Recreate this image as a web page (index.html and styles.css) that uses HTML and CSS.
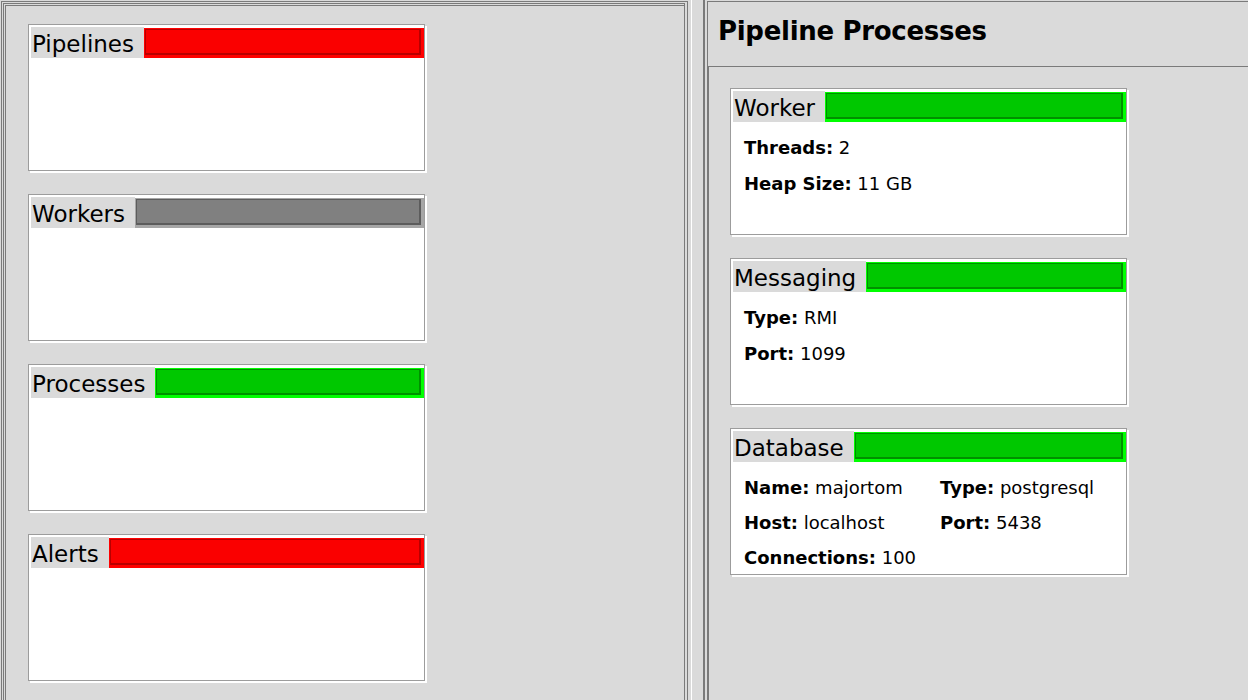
FILE: index.html
```html
<!DOCTYPE html>
<html lang="en">
<head>
<meta charset="utf-8">
<title>Pipeline Processes</title>
<link rel="stylesheet" href="styles.css">
</head>
<body>
<div class="app">
  <div class="left-pane">
    <div class="left-frame">
      <div class="left-scroll">
        <div class="left-view">
          <div class="card">
            <div class="card-header">
              <span class="card-title">Pipelines</span>
              <div class="status red"><div class="status-inner"></div></div>
            </div>
            <div class="card-body"></div>
          </div>
          <div class="card">
            <div class="card-header">
              <span class="card-title">Workers</span>
              <div class="status gray"><div class="status-inner"></div></div>
            </div>
            <div class="card-body"></div>
          </div>
          <div class="card">
            <div class="card-header">
              <span class="card-title">Processes</span>
              <div class="status green"><div class="status-inner"></div></div>
            </div>
            <div class="card-body"></div>
          </div>
          <div class="card">
            <div class="card-header">
              <span class="card-title">Alerts</span>
              <div class="status red"><div class="status-inner"></div></div>
            </div>
            <div class="card-body"></div>
          </div>
        </div>
      </div>
    </div>
  </div>
  <div class="divider"><div class="divider-line"></div></div>
  <div class="right-pane">
    <div class="right-frame">
      <h1 class="title">Pipeline Processes</h1>
      <div class="process-panel">
        <div class="card">
          <div class="card-header">
            <span class="card-title">Worker</span>
            <div class="status green"><div class="status-inner"></div></div>
          </div>
          <div class="card-body info">
            <div class="info-row"><b>Threads:</b> 2</div>
            <div class="info-row"><b>Heap Size:</b> 11 GB</div>
          </div>
        </div>
        <div class="card">
          <div class="card-header">
            <span class="card-title">Messaging</span>
            <div class="status green"><div class="status-inner"></div></div>
          </div>
          <div class="card-body info">
            <div class="info-row"><b>Type:</b> RMI</div>
            <div class="info-row"><b>Port:</b> 1099</div>
          </div>
        </div>
        <div class="card">
          <div class="card-header">
            <span class="card-title">Database</span>
            <div class="status green"><div class="status-inner"></div></div>
          </div>
          <div class="card-body info info-grid">
            <div class="info-cell"><b>Name:</b> majortom</div>
            <div class="info-cell"><b>Type:</b> postgresql</div>
            <div class="info-cell"><b>Host:</b> localhost</div>
            <div class="info-cell"><b>Port:</b> 5438</div>
            <div class="info-cell"><b>Connections:</b> 100</div>
          </div>
        </div>
      </div>
    </div>
  </div>
</div>
</body>
</html>
```

FILE: styles.css
```css
* {
  box-sizing: border-box;
}

html, body {
  margin: 0;
  padding: 0;
  background: #dadada;
}

body {
  font-family: "DejaVu Sans", "Liberation Sans", sans-serif;
  color: #000;
}

.app {
  display: flex;
  height: 700px;
  overflow: hidden;
  background: #dadada;
}

/* ---------- left pane ---------- */
.left-pane {
  width: 688px;
  flex: none;
  padding: 1px 0 0 1px;
}

.left-frame {
  min-height: 720px;
  border: 1px solid #7a7a7a;
  padding: 1px 2px 0 1px;
}

.left-scroll {
  min-height: 720px;
  border: 1px solid #7a7a7a;
  padding: 1px 0 0 1px;
}

.left-view {
  min-height: 720px;
  border-left: 1px solid #7a7a7a;
  border-top: 1px solid #7a7a7a;
  padding: 18px 0 0 22px;
  display: flex;
  flex-direction: column;
  gap: 23px;
}

/* ---------- divider ---------- */
.divider {
  width: 15px;
  flex: none;
  padding-left: 3px;
}

.divider-line {
  width: 1px;
  height: 100%;
  background: #ffffff;
}

/* ---------- right pane ---------- */
.right-pane {
  flex: 1;
  border-left: 2px solid #7a7a7a;
  padding: 1px 0 0 2px;
}

.right-frame {
  min-height: 720px;
  border-top: 1px solid #7a7a7a;
  border-left: 1px solid #7a7a7a;
}

.title {
  margin: 0;
  height: 64px;
  padding: 14px 0 20px 10px;
  font-size: 26px;
  line-height: 30px;
  font-weight: bold;
  letter-spacing: -0.3px;
  white-space: nowrap;
}

.process-panel {
  min-height: 700px;
  border-top: 1px solid #7a7a7a;
  border-left: 1px solid #7a7a7a;
  padding: 21px 0 0 21px;
  display: flex;
  flex-direction: column;
  gap: 23px;
}

/* ---------- cards ---------- */
.card {
  width: 397px;
  height: 147px;
  flex: none;
  border: 1px solid #9c9c9c;
  padding: 2px 0 0 2px;
  background: #ffffff;
  box-shadow: 2px 2px 0 0 #ffffff;
  display: flex;
  flex-direction: column;
  overflow: hidden;
}

.card-header {
  display: flex;
  height: 31px;
  flex: none;
}

.card-title {
  background: #dadada;
  font-size: 23px;
  line-height: 34px;
  height: 31px;
  overflow: hidden;
  padding: 0 10px 0 1px;
  white-space: nowrap;
}

.status {
  flex: 1;
  margin-top: 1px;
  height: 30px;
  padding: 1px 3px 3px 1px;
}

.status-inner {
  height: 100%;
  border-style: solid;
  border-width: 1px 2px 2px 1px;
}

.status.red {
  background: #ff0000;
}
.status.red .status-inner {
  background: #fa0000;
  border-color: #b80000;
}

.status.green {
  background: #00ff00;
}
.status.green .status-inner {
  background: #00c800;
  border-color: #009000;
}

.status.gray {
  background: #a6a6a6;
}
.status.gray .status-inner {
  background: #808080;
  border-color: #5c5c5c;
}

.card-body {
  flex: 1;
  min-height: 0;
  overflow: hidden;
  background: #ffffff;
}

.info {
  padding: 8px 0 0 11px;
  font-size: 18px;
}

.info-row {
  height: 36px;
  line-height: 36px;
  white-space: nowrap;
}

.info-grid {
  display: grid;
  grid-template-columns: 196px auto;
  grid-auto-rows: 35px;
  align-content: start;
}

.info-cell {
  line-height: 35px;
  white-space: nowrap;
}
```
